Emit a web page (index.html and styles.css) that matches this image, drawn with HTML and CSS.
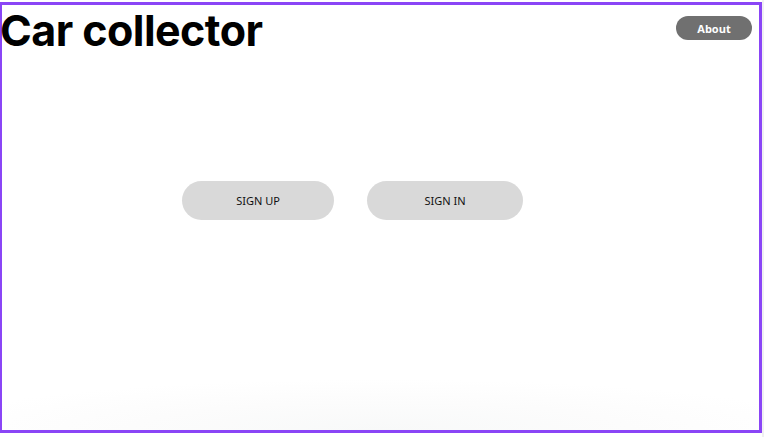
FILE: index.html
```html
<!DOCTYPE html>
<html lang="en">
<head>
<meta charset="utf-8">
<title>Car collector</title>
<link rel="stylesheet" href="styles.css">
</head>
<body>
<div class="frame">
  <header class="top">
    <h1 class="title">Car collector</h1>
    <button class="about">About</button>
  </header>
  <main class="actions">
    <button class="pill pill-up">SIGN UP</button>
    <button class="pill pill-in">SIGN IN</button>
  </main>
</div>
</body>
</html>
```
FILE: styles.css
```css
html, body {
  margin: 0;
  padding: 0;
  background: #ffffff;
  width: 764px;
  height: 437px;
  overflow: hidden;
}
body {
  position: relative;
}
body::after {
  content: "";
  position: absolute;
  top: 0;
  right: 0;
  width: 2px;
  height: 437px;
  background: #f0f0f2;
}
.frame {
  box-sizing: border-box;
  margin-top: 2px;
  width: 762px;
  height: 431px;
  border: 3px solid #8a45f6;
  border-left-width: 2px;
  background: radial-gradient(ellipse 60% 12% at 50% 100%, #f8f9f9 0%, #fcfcfc 55%, #ffffff 100%);
  display: flex;
  flex-direction: column;
}
.top {
  display: flex;
  justify-content: space-between;
  align-items: flex-start;
}
.title {
  margin: 1px 0 0 -2px;
  font-family: Inter, "Liberation Sans", sans-serif;
  font-weight: 700;
  font-size: 43px;
  line-height: 48px;
  color: #000;
  letter-spacing: -0.55px;
}
.about {
  margin: 11px 7px 0 0;
  width: 76px;
  height: 24px;
  border: none;
  border-radius: 12px;
  background: #707070;
  color: #fff;
  font-family: "Open Sans", "Liberation Sans", sans-serif;
  font-weight: 700;
  font-size: 11px;
  padding: 0;
}
.actions {
  display: flex;
  gap: 33px;
  margin-top: 127px;
  padding-left: 180px;
}
.pill {
  height: 39px;
  border: none;
  border-radius: 20px;
  background: #d9d9d9;
  color: #111;
  font-family: "Noto Sans", "Liberation Sans", sans-serif;
  font-size: 11px;
  padding: 0;
}
.pill-up { width: 152px; }
.pill-in { width: 156px; }
```
